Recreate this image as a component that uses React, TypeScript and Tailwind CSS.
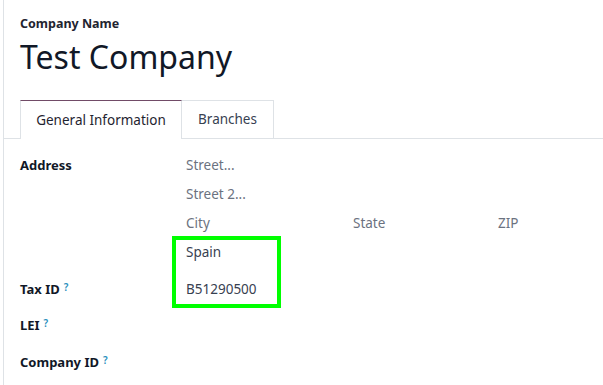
import React from "react";

const font = { fontFamily: '"Noto Sans", "Open Sans", sans-serif' };

function Help() {
  return <sup className="ml-[4px] text-[10px] font-semibold text-[#2a8fbd] relative top-[-3px]">?</sup>;
}

export default function App() {
  return (
    <div className="relative w-[603px] h-[385px] bg-white overflow-hidden" style={font}>
      <div className="ml-[3px] h-full border-l border-[#dee2e6] flex flex-col">
        <div className="pl-[16px] pt-[14px]">
          <div className="text-[12.5px] font-bold text-[#1f2430] leading-[20px]">Company Name</div>
          <div className="text-[32px] leading-[44px] text-[#111827] mt-[1px]">Test Company</div>
        </div>
        <div className="mt-[21px] flex border-b border-[#dee2e6] pl-[16px] h-[39px]">
          <div className="h-[39px] w-[162px] flex items-center justify-center border-t border-t-[#714b67] border-l border-r border-[#dee2e6] bg-white -mb-px text-[13.5px] text-[#1f2430]">
            General Information
          </div>
          <div className="h-[38px] w-[92px] flex items-center justify-center border-t border-r border-[#dee2e6] text-[13.5px] text-[#374151]">
            Branches
          </div>
        </div>
        <div className="pl-[16px] pt-[12px] text-[13.5px]">
          <div className="flex">
            <div className="w-[166px] h-[29px] flex items-center font-bold text-[13px] text-[#111827]">Address</div>
            <div className="flex flex-col text-[#6b7280]">
              <div className="h-[29px] flex items-center">Street...</div>
              <div className="h-[29px] flex items-center">Street 2...</div>
              <div className="h-[29px] flex items-center">
                <span className="w-[167px]">City</span>
                <span className="w-[145px]">State</span>
                <span>ZIP</span>
              </div>
              <div className="h-[29px] flex items-center text-[#374151]">Spain</div>
            </div>
          </div>
          <div className="flex mt-[8px] h-[29px] items-center">
            <div className="w-[166px] font-bold text-[13px] text-[#111827]">Tax ID<Help /></div>
            <div className="text-[#374151]">B51290500</div>
          </div>
          <div className="flex mt-[7px] h-[29px] items-center">
            <div className="w-[166px] font-bold text-[13px] text-[#111827]">LEI<Help /></div>
          </div>
          <div className="flex mt-[8px] h-[29px] items-center">
            <div className="w-[166px] font-bold text-[13px] text-[#111827]">Company ID<Help /></div>
          </div>
        </div>
      </div>
      <div className="absolute left-[172px] top-[236px] w-[109px] h-[72px] border-4 border-[#00ff00]" />
    </div>
  );
}
